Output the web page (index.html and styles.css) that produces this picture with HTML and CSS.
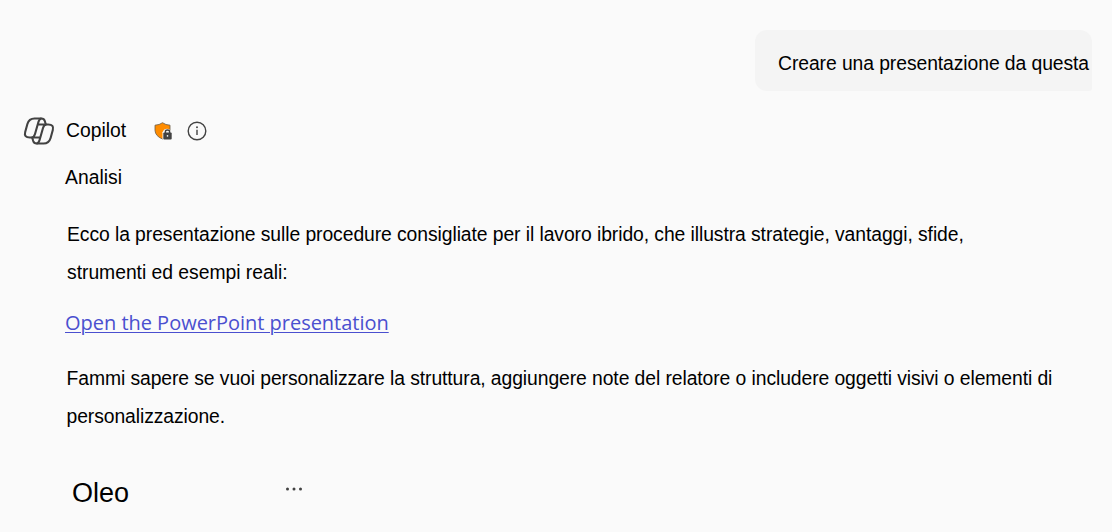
FILE: index.html
```
<!DOCTYPE html>
<html lang="it">
<head>
    <meta charset="UTF-8">
    <meta name="viewport" content="width=device-width, initial-scale=1.0">
    <title>Copilot</title>
    <link rel="stylesheet" href="styles.css">
</head>
<body>
    <main class="chat">
        <div class="user-message"><span class="prompt">Creare una presentazione da questa</span></div>

        <section class="reply">
            <header class="reply-header">
                <svg class="logo" width="32" height="30" viewBox="0 0 32 30">
                    <path d="M11.5 2.5H18.5Q21 2.5 21.8 5L22.8 8.5H25.2Q31.3 8.5 29.8 14L27.6 22Q26 27.5 20.5 27.5H13.5Q11 27.5 10.2 25L9.2 21.5H6.8Q.7 21.5 2.2 16L4.4 8Q6 2.5 11.5 2.5Z"/>
                    <path d="M18.5 2.5Q16.4 2.7 15.5 5.8L12 18Q11 21.5 8.5 21.5M13.5 27.5Q15.6 27.3 16.5 24.2L20 12Q21 8.5 23.5 8.5M15 8.5H22M10 21.5H17"/>
                </svg>
                <span class="name">Copilot</span>
                <svg class="shield" width="18" height="18" viewBox="0 0 18 18">
                    <path class="shield-body" d="M8.5.7Q11.5 3 16 3.2V8.5Q15.6 14.2 8.5 17Q1.4 14.2 1 8.5V3.2Q5.5 3 8.5.7Z"/>
                    <path class="lock-gap" d="M8.5 17.5V10.2Q10 6.8 13 6.8T17.6 10.2V17.5Z"/>
                    <rect class="lock-body" x="9.3" y="10.4" width="8.4" height="7" rx="1"/>
                    <path class="lock-bar" d="M11.4 11V9.7Q11.4 8 13.5 8T15.6 9.7V11"/>
                    <circle class="lock-hole" cx="13.5" cy="13.9" r=".8"/>
                </svg>
                <svg class="info" width="20" height="20" viewBox="0 0 20 20">
                    <circle cx="10" cy="10" r="8.8"/>
                    <path d="M10 8.7V14"/>
                    <circle class="info-dot" cx="10" cy="6.3" r=".95"/>
                </svg>
            </header>

            <div class="label">Analisi</div>

            <p class="text intro">Ecco la presentazione sulle procedure consigliate per il lavoro ibrido, che illustra strategie, vantaggi, sfide,<br><span class="short-line">strumenti ed esempi reali:</span></p>

            <a class="link" href="#">Open the PowerPoint presentation</a>

            <p class="text outro">Fammi sapere se vuoi personalizzare la struttura, aggiungere note del relatore o includere oggetti visivi o elementi di<br>personalizzazione.</p>

            <footer class="reply-footer">
                <span class="source">Oleo</span>
                <svg class="more" width="18" height="4" viewBox="0 0 18 4">
                    <circle cx="2.5" cy="2" r="1.5"/>
                    <circle cx="9" cy="2" r="1.5"/>
                    <circle cx="15.5" cy="2" r="1.5"/>
                </svg>
            </footer>
        </section>
    </main>
</body>
</html>
```
FILE: styles.css
```
* {
    box-sizing: border-box;
}
body {
    margin: 0;
    background: #fafafa;
    color: #000;
    font-family: "Liberation Sans", Arial, sans-serif;
    font-size: 19.33px;
}
.chat {
    display: flex;
    flex-direction: column;
    height: 532px;
    padding: 30px 20px 0 23px;
    overflow: hidden;
    white-space: nowrap;
}
.user-message {
    align-self: flex-end;
    width: 337px;
    height: 61px;
    padding: 3px 0 0 23px;
    border-radius: 12px 12px 3px 12px;
    background: #f4f4f4;
    line-height: 61px;
}
.prompt {
    letter-spacing: -0.08px;
}
.reply {
    display: flex;
    flex-direction: column;
    align-items: flex-start;
    padding-left: 43px;
}
.reply-header {
    display: flex;
    align-items: center;
    height: 30px;
    margin: 25px 0 0 -43px;
}
.logo {
    margin-right: 11px;
    fill: none;
    stroke: #424242;
    stroke-width: 2.1;
    stroke-linejoin: round;
}
.name {
    width: 88px;
    line-height: 30px;
}
.shield-body {
    fill: #ff8c00;
    stroke: #6b5a45;
    stroke-width: 0.8;
}
.lock-gap {
    fill: #fafafa;
}
.lock-body {
    fill: #424242;
}
.lock-bar {
    fill: none;
    stroke: #424242;
    stroke-width: 1.4;
}
.lock-hole {
    fill: #fafafa;
}
.info {
    margin-left: 15px;
    fill: none;
    stroke: #424242;
    stroke-width: 1.4;
}
.info-dot {
    fill: #424242;
    stroke: none;
}
.label {
    height: 30px;
    margin: 17px 0 0 -1px;
    line-height: 30px;
}
.text {
    margin: 0;
    line-height: 38px;
    letter-spacing: -0.08px;
}
.intro {
    margin-top: 23px;
    padding-left: 1px;
}
.short-line {
    letter-spacing: -0.03px;
}
.link {
    margin: 16px 0 0 -1px;
    color: #4a4fcf;
    font-family: "Open Sans", "Noto Sans", sans-serif;
    font-size: 20px;
    line-height: 30px;
    letter-spacing: -0.02px;
    text-decoration-thickness: 1px;
    text-underline-offset: 2px;
}
.outro {
    margin-top: 22px;
    padding-left: 0.5px;
    letter-spacing: -0.085px;
}
.reply-footer {
    display: flex;
    align-items: center;
    margin: 41px 0 0 6px;
}
.source {
    width: 213px;
    font-size: 27px;
    line-height: 32px;
}
.more {
    margin-bottom: 8px;
    fill: #424242;
}
```
